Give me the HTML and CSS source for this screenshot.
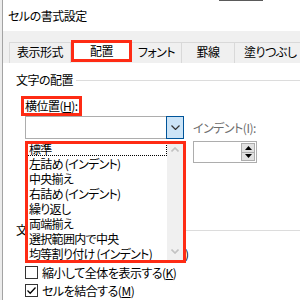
FILE: index.html
```html
<!DOCTYPE html>
<html lang="ja">
<head>
<meta charset="utf-8">
<title>セルの書式設定</title>
<link rel="stylesheet" href="styles.css">
</head>
<body>
<div class="screen">
  <div class="edge"></div>
  <div class="dialog">
    <div class="titlebar">セルの書式設定</div>
    <div class="tabbar">
      <div class="tab tab-1">表示形式</div>
      <div class="tab tab-2 is-active">配置</div>
      <div class="tab tab-3">フォント</div>
      <div class="tab tab-4">罫線</div>
      <div class="tab tab-5">塗りつぶし</div>
    </div>
    <div class="panel">
      <div class="group-head"><span>文字の配置</span></div>
      <div class="label-box">横位置(<u>H</u>):</div>
      <div class="align-grid">
        <div class="combo-wrap">
          <div class="combo">
            <div class="combo-btn">
              <svg width="9" height="5" viewBox="0 0 9 5"><polyline points="0.5,0.5 4.5,4.5 8.5,0.5" fill="none" stroke="#333" stroke-width="1.2"/></svg>
            </div>
          </div>
          <div class="dropdown">
            <ul class="items">
              <li class="item is-focus">標準</li>
              <li class="item">左詰め (インデント)</li>
              <li class="item">中央揃え</li>
              <li class="item">右詰め (インデント)</li>
              <li class="item">繰り返し</li>
              <li class="item">両端揃え</li>
              <li class="item">選択範囲内で中央</li>
              <li class="item">均等割り付け (インデント)</li>
            </ul>
            <div class="scrollbar">
              <div class="sb-btn">
                <svg width="8" height="5" viewBox="0 0 8 5"><polyline points="0.5,4.5 4,1 7.5,4.5" fill="none" stroke="#c2c2c2" stroke-width="1.6"/></svg>
              </div>
              <div class="sb-btn">
                <svg width="8" height="5" viewBox="0 0 8 5"><polyline points="0.5,0.5 4,4 7.5,0.5" fill="none" stroke="#c2c2c2" stroke-width="1.6"/></svg>
              </div>
            </div>
          </div>
        </div>
        <div class="indent-label">インデント(I):</div>
        <div class="grid-spacer"></div>
        <div class="spin">
          <div class="spin-btns">
            <div class="spin-btn"><svg width="7" height="4" viewBox="0 0 7 4"><polygon points="0,4 3.5,0 7,4" fill="#000"/></svg></div>
            <div class="spin-btn"><svg width="7" height="4" viewBox="0 0 7 4"><polygon points="0,0 3.5,4 7,0" fill="#000"/></svg></div>
          </div>
        </div>
      </div>
      <div class="group-head group-head-2"><span>文字の制御</span></div>
      <div class="check-row first-row">
        <span class="checkbox"></span>
        <span class="check-label">折り返して全体を表示する(<u>W</u>)</span>
      </div>
      <div class="check-row">
        <span class="checkbox"></span>
        <span class="check-label">縮小して全体を表示する(<u>K</u>)</span>
      </div>
      <div class="check-row">
        <span class="checkbox">
          <svg width="11" height="11" viewBox="0 0 11 11"><polyline points="1.5,5.5 4.2,8.2 9.5,2.5" fill="none" stroke="#000" stroke-width="1.3"/></svg>
        </span>
        <span class="check-label">セルを結合する(<u>M</u>)</span>
      </div>
    </div>
  </div>
</div>
</body>
</html>
```

FILE: styles.css
```css
* {
  box-sizing: border-box;
  margin: 0;
  padding: 0;
}

html,
body {
  width: 300px;
  height: 300px;
  overflow: hidden;
  background: #fff;
}

body {
  font-family: "Noto Sans CJK JP", "Noto Sans", sans-serif;
  font-size: 12px;
  color: #000;
  letter-spacing: -0.5px;
  font-feature-settings: "palt";
}

u {
  text-decoration: underline;
  text-underline-offset: 1px;
}

.screen {
  display: flex;
  height: 300px;
}

.edge {
  flex: none;
  width: 3px;
  background: #ececec;
  border-right: 1px solid #a3a3a3;
}

.dialog {
  flex: 1;
  min-width: 0;
  display: flex;
  flex-direction: column;
  background: #f0f0f0;
}

.titlebar {
  position: relative;
  flex: none;
  height: 31px;
  line-height: 31px;
  padding-left: 5px;
  background: #fff;
}

.titlebar::after {
  content: "";
  position: absolute;
  top: 0;
  left: 216px;
  width: 44px;
  height: 1px;
  background: #5a5a5a;
}

.tabbar {
  flex: none;
  display: flex;
  align-items: flex-end;
  height: 32px;
  padding-left: 6px;
}

.tab {
  flex: none;
  height: 21px;
  line-height: 17px;
  text-align: center;
  background: #f0f0f0;
  border-top: 1px solid #d9d9d9;
  border-right: 1px solid #d9d9d9;
  white-space: nowrap;
}

.tab-1 {
  width: 62px;
  border-left: 1px solid #d9d9d9;
}

.tab-2 {
  width: 61px;
}

.tab-3 {
  width: 50px;
}

.tab-4 {
  width: 53px;
}

.tab-5 {
  width: 80px;
  text-align: left;
  padding-left: 9px;
  border-right: none;
}

.tab.is-active {
  height: 22px;
  margin-bottom: 1px;
  line-height: 16px;
  background: #fff;
  border: 3px solid #fe2b14;
}

.panel {
  flex: 1;
  min-height: 0;
  display: flex;
  flex-direction: column;
  align-items: flex-start;
  padding-left: 13px;
  background: #fff;
}

.group-head {
  display: flex;
  align-items: center;
  align-self: stretch;
  height: 13px;
  line-height: 13px;
  margin-top: 10px;
  white-space: nowrap;
}

.group-head::after {
  content: "";
  flex: 1;
  margin-left: 3px;
  margin-top: 2px;
  border-top: 1px solid #dcdcdc;
}

.label-box {
  height: 20px;
  margin: 10px 0 0 5px;
  padding: 0 1px;
  line-height: 14px;
  border: 3px solid #fe2b14;
  white-space: nowrap;
}

.align-grid {
  display: grid;
  grid-template-columns: 159px 64px;
  grid-template-rows: 23px 22px;
  column-gap: 9px;
  row-gap: 2px;
  margin-left: 9px;
}

.combo-wrap {
  position: relative;
}

.combo {
  display: flex;
  justify-content: flex-end;
  width: 159px;
  height: 23px;
  background: #fff;
  border: 1px solid #adadad;
}

.combo-btn {
  display: flex;
  align-items: center;
  justify-content: center;
  width: 18px;
  margin: -1px -1px -1px 0;
  background: #cce4f7;
  border: 1px solid #005499;
}

.dropdown {
  position: absolute;
  top: 25px;
  left: 0;
  z-index: 2;
  display: flex;
  width: 161px;
  height: 122px;
  padding: 0 3px 3px 0;
  background: #fff;
  outline: 3px solid #fe2b14;
  outline-offset: -3px;
}

.items {
  flex: 1;
  min-width: 0;
  list-style: none;
}

.item {
  height: 15px;
  line-height: 15px;
  padding-left: 4px;
  letter-spacing: -0.7px;
  white-space: nowrap;
}

.item.is-focus {
  outline: 1px dotted #000;
  outline-offset: -1px;
}

.scrollbar {
  flex: none;
  display: flex;
  flex-direction: column;
  justify-content: space-between;
  width: 16px;
  background: #f0f0f0;
}

.sb-btn {
  display: flex;
  align-items: center;
  justify-content: center;
  height: 17px;
}

.indent-label {
  line-height: 23px;
  color: #6d6d6d;
  white-space: nowrap;
}

.spin {
  display: flex;
  justify-content: flex-end;
  padding: 1px;
  border: 1px solid #adadad;
  background: #fff;
}

.spin-btns {
  display: flex;
  flex-direction: column;
  width: 14px;
}

.spin-btn {
  flex: 1;
  display: flex;
  align-items: center;
  justify-content: center;
  background: #e1e1e1;
  border: 1px solid #adadad;
}

.spin-btn + .spin-btn {
  border-top: none;
}

.group-head-2 {
  margin-top: 60px;
}

.check-row {
  display: flex;
  align-items: center;
  gap: 4px;
  height: 22px;
  margin-left: 9px;
  white-space: nowrap;
}

.first-row {
  margin-top: 8px;
}

.checkbox {
  flex: none;
  display: flex;
  align-items: center;
  justify-content: center;
  width: 13px;
  height: 13px;
  background: #fff;
  border: 1px solid #333;
}
```
